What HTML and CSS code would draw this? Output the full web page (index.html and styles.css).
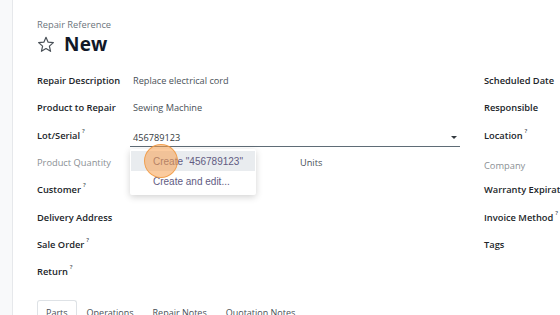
FILE: index.html
```html
<!DOCTYPE html>
<html>
<head>
<meta charset="utf-8">
<link rel="stylesheet" href="styles.css">
</head>
<body>
<div class="sidebar"></div>
<div class="main">
  <div class="crumb">Repair Reference</div>
  <div class="title">
    <svg class="star" width="18" height="17" viewBox="0 0 24 23"><path d="M12 1.8l2.9 6.6 7.1.6-5.4 4.7 1.6 7-6.2-3.7-6.2 3.7 1.6-7L2 9l7.1-.6z" fill="none" stroke="#495057" stroke-width="1.6" stroke-linejoin="round"/></svg>
    <span class="new">New</span>
  </div>
  <div class="form">
    <div class="col left">
      <div class="row"><div class="lbl">Repair Description</div><div class="val">Replace electrical cord</div></div>
      <div class="row"><div class="lbl">Product to Repair</div><div class="val">Sewing Machine</div></div>
      <div class="row"><div class="lbl">Lot/Serial<sup>?</sup></div>
        <div class="val input">
          <span>456789123</span>
          <span class="caret"></span>
          <div class="dropdown">
            <div class="item active">Create "456789123"</div>
            <div class="item">Create and edit...</div>
          </div>
          <div class="spot"></div>
        </div>
      </div>
      <div class="row"><div class="lbl muted">Product Quantity</div><div class="val"><span class="units">Units</span></div></div>
      <div class="row"><div class="lbl">Customer<sup>?</sup></div><div class="val"></div></div>
      <div class="row"><div class="lbl">Delivery Address</div><div class="val"></div></div>
      <div class="row"><div class="lbl">Sale Order<sup>?</sup></div><div class="val"></div></div>
      <div class="row"><div class="lbl">Return<sup>?</sup></div><div class="val"></div></div>
    </div>
    <div class="col right">
      <div class="row"><div class="lbl">Scheduled Date</div></div>
      <div class="row"><div class="lbl">Responsible</div></div>
      <div class="row"><div class="lbl">Location<sup>?</sup></div></div>
      <div class="row company"><div class="lbl muted">Company</div></div>
      <div class="row"><div class="lbl">Warranty Expiration</div></div>
      <div class="row"><div class="lbl">Invoice Method<sup>?</sup></div></div>
      <div class="row"><div class="lbl">Tags</div></div>
    </div>
  </div>
  <div class="tabs">
    <div class="tab active">Parts</div>
    <div class="tab">Operations</div>
    <div class="tab">Repair Notes</div>
    <div class="tab">Quotation Notes</div>
  </div>
</div>
</body>
</html>
```

FILE: styles.css
```css
html, body {
  margin: 0;
  padding: 0;
  background: #fff;
  overflow: hidden;
}
body {
  display: flex;
  width: 560px;
  height: 315px;
  font-family: "Open Sans", "Noto Sans", sans-serif;
  color: #212529;
}
.sidebar {
  width: 12px;
  flex: none;
  background: #f8f9fa;
  border-right: 1px solid #e6e8eb;
}
.main {
  flex: 1;
  padding-left: 24px;
  padding-top: 18px;
  min-width: 0;
}
.crumb {
  font-size: 9.3px;
  color: #6c757d;
  line-height: 14px;
}
.title {
  display: flex;
  align-items: center;
  height: 22px;
  margin-top: 1px;
}
.star {
  margin-right: 9px;
}
.new {
  font-size: 19px;
  font-weight: 700;
  color: #111827;
  letter-spacing: 0.2px;
}
.form {
  display: flex;
  margin-top: 12px;
}
.col.left {
  width: 423px;
  flex: none;
}
.col.right {
  margin-left: 24px;
  flex: none;
}
.row {
  display: flex;
  align-items: center;
  height: 27.3px;
  font-size: 9.3px;
  box-sizing: border-box;
}
.lbl {
  width: 96px;
  flex: none;
  font-weight: 600;
  white-space: nowrap;
  color: #212529;
}
.right .lbl {
  width: auto;
}
.row.company {
  padding-top: 6px;
}
.lbl.muted {
  color: #8a8f94;
  font-weight: 500;
}
sup {
  font-size: 6px;
  vertical-align: top;
  position: relative;
  top: -2px;
  margin-left: 2px;
  color: #495057;
}
.val {
  flex: 1;
  color: #495057;
  font-size: 9.2px;
}
.val.input {
  position: relative;
  margin-left: -3px;
  padding-left: 3px;
  height: 17px;
  display: flex;
  align-items: center;
  border-bottom: 1.5px solid #5f6c76;
  margin-top: 5px;
  color: #343a40;
}
.caret {
  margin-left: auto;
  margin-right: 3px;
  width: 0;
  height: 0;
  border-left: 3px solid transparent;
  border-right: 3px solid transparent;
  border-top: 3.5px solid #343a40;
}
.dropdown {
  position: absolute;
  left: 0;
  top: 20px;
  width: 126px;
  background: #fff;
  border-radius: 2px;
  box-shadow: 0 2px 7px rgba(0,0,0,0.18);
  padding: 2px 0 4px;
  z-index: 2;
  font-family: "Liberation Sans", Arial, sans-serif;
  font-size: 10px;
}
.item {
  height: 20px;
  line-height: 21px;
  padding-left: 22px;
  color: #615b82;
  margin: 0 1px;
}
.item.active {
  background: #e9ecef;
}
.spot {
  position: absolute;
  left: 14px;
  top: 15px;
  width: 34px;
  height: 34px;
  border-radius: 50%;
  background: rgba(247, 160, 80, 0.55);
  border: 1px solid rgba(240, 150, 60, 0.8);
  box-sizing: border-box;
  z-index: 3;
}
.units {
  margin-left: 167px;
  color: #495057;
}
.tabs {
  display: flex;
  margin-top: 15px;
  font-size: 9px;
  color: #495057;
}
.tab {
  padding: 5px 8px 6px 8px;
  border: 1px solid transparent;
  border-bottom: none;
  border-radius: 3px 3px 0 0;
  margin-right: 1px;
}
.tab.active {
  border-color: #dee2e6;
  color: #495057;
}
```
